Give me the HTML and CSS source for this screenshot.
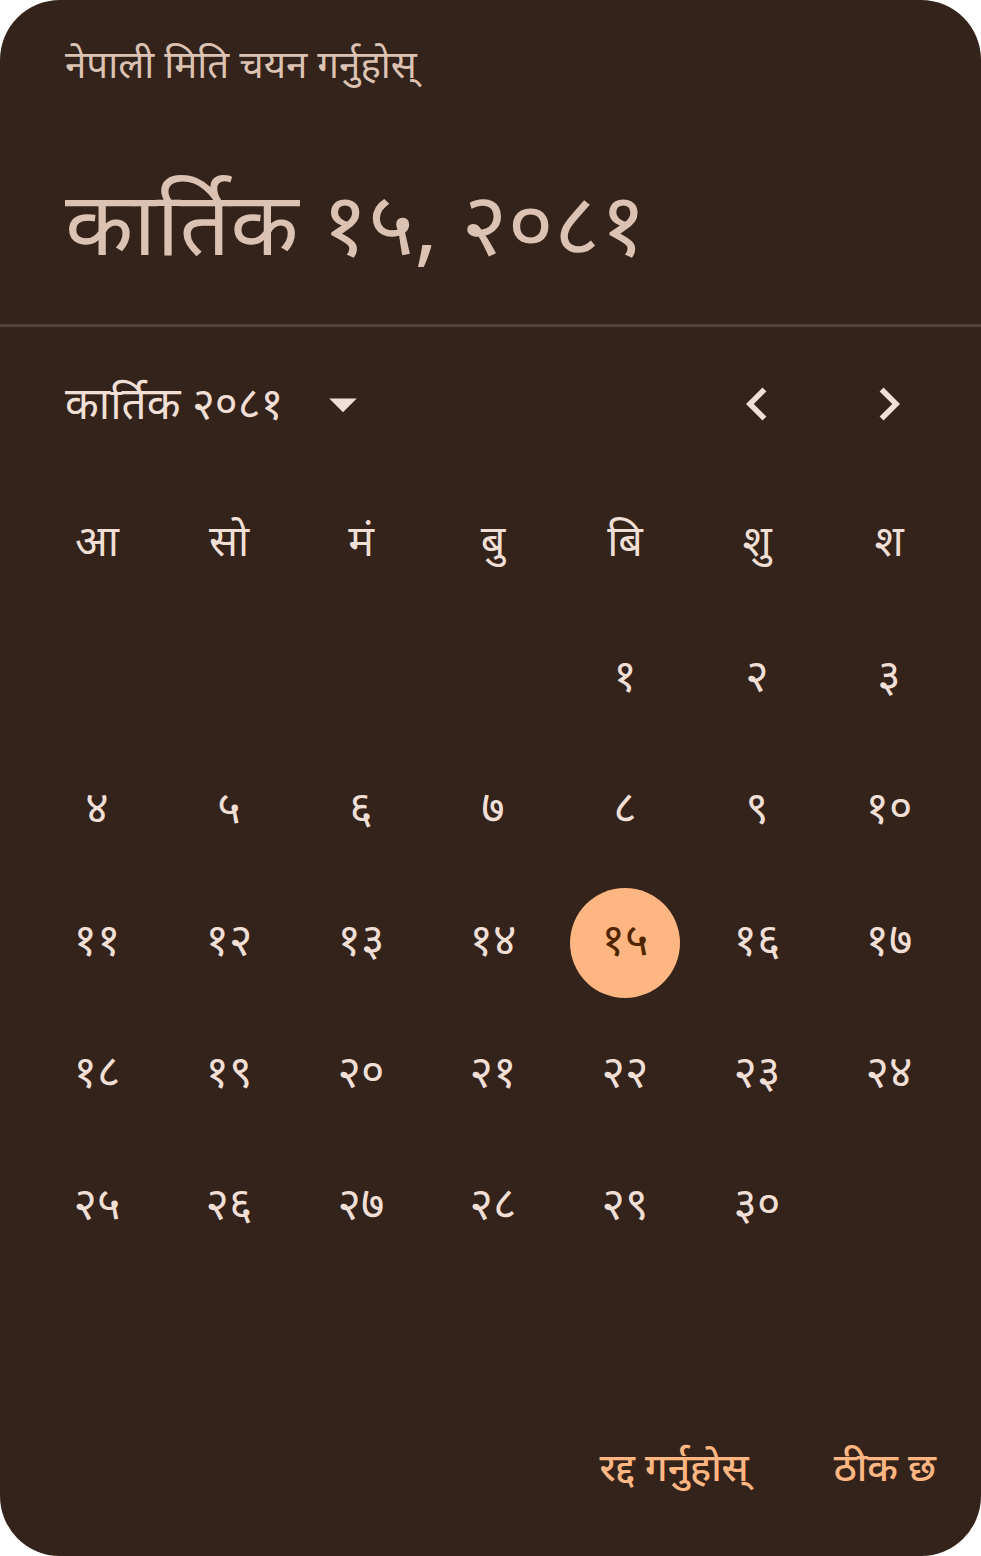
FILE: index.html
```html
<!DOCTYPE html>
<html>
<head>
    <meta charset="utf-8">
    <title>Nepali Date Picker</title>
    <link rel="stylesheet" href="styles.css">
</head>
<body>
    <div class="picker">
        <div class="header">
            <div class="title">नेपाली मिति चयन गर्नुहोस्</div>
            <div class="headline">कार्तिक १५, २०८१</div>
        </div>
        <div class="divider"></div>

        <div class="month-row">
            <div class="month-label">कार्तिक २०८१</div>
            <svg class="drop" viewBox="0 0 24 24"><path d="M7 10l5 5 5-5z"/></svg>
            <div class="nav">
                <button class="nav-btn">
                    <svg viewBox="0 0 24 24"><path d="M15.41 7.41L14 6l-6 6 6 6 1.41-1.41L10.83 12z"/></svg>
                </button>
                <button class="nav-btn">
                    <svg viewBox="0 0 24 24"><path d="M10 6L8.59 7.41 13.17 12l-4.58 4.59L10 18l6-6z"/></svg>
                </button>
            </div>
        </div>

        <div class="weekdays">
            <div>आ</div>
            <div>सो</div>
            <div>मं</div>
            <div>बु</div>
            <div>बि</div>
            <div>शु</div>
            <div>श</div>
        </div>

        <div class="days">
            <div></div><div></div><div></div><div></div>
            <div><span>१</span></div>
            <div><span>२</span></div>
            <div><span>३</span></div>
            <div><span>४</span></div>
            <div><span>५</span></div>
            <div><span>६</span></div>
            <div><span>७</span></div>
            <div><span>८</span></div>
            <div><span>९</span></div>
            <div><span>१०</span></div>
            <div><span>११</span></div>
            <div><span>१२</span></div>
            <div><span>१३</span></div>
            <div><span>१४</span></div>
            <div><span class="selected">१५</span></div>
            <div><span>१६</span></div>
            <div><span>१७</span></div>
            <div><span>१८</span></div>
            <div><span>१९</span></div>
            <div><span>२०</span></div>
            <div><span>२१</span></div>
            <div><span>२२</span></div>
            <div><span>२३</span></div>
            <div><span>२४</span></div>
            <div><span>२५</span></div>
            <div><span>२६</span></div>
            <div><span>२७</span></div>
            <div><span>२८</span></div>
            <div><span>२९</span></div>
            <div><span>३०</span></div>
            <div></div>
            <div></div><div></div><div></div><div></div><div></div><div></div><div></div>
        </div>

        <div class="actions">
            <button class="text-btn">रद्द गर्नुहोस्</button>
            <button class="text-btn">ठीक छ</button>
        </div>
    </div>
</body>
</html>
```

FILE: styles.css
```css
* {
    margin: 0px;
    padding: 0px;
    box-sizing: border-box;
}
body {
    background: #fff;
    font-family: "Noto Sans", "Noto Sans Devanagari", sans-serif;
}
.picker {
    width: 981px;
    height: 1556px;
    background: #33231a;
    border-radius: 60px;
    overflow: hidden;
}
.header {
    height: 324px;
    padding: 38px 65px 0;
}
.title {
    font-size: 38.5px;
    line-height: 50px;
    color: #dcc2b2;
}
.headline {
    margin-top: 83px;
    font-size: 89px;
    line-height: 100px;
    color: #dcc2b2;
}
.divider {
    height: 3px;
    background: #51423a;
}
.month-row {
    height: 150px;
    display: flex;
    align-items: center;
    padding: 0 26px 0 65px;
}
.month-label {
    font-size: 44px;
    color: #f1dfd5;
}
.drop {
    width: 66px;
    height: 66px;
    margin-left: 27px;
    margin-top: 4px;
    fill: #f1dfd5;
}
.nav {
    margin-left: auto;
    margin-top: 4px;
    display: flex;
}
.nav-btn {
    width: 132px;
    height: 132px;
    display: flex;
    align-items: center;
    justify-content: center;
    background: none;
    border: none;
}
.nav-btn svg {
    width: 66px;
    height: 66px;
    fill: #f1dfd5;
}
.weekdays,
.days {
    display: grid;
    grid-template-columns: repeat(7, 132px);
    padding-left: 31px;
}
.weekdays div {
    height: 136px;
    padding-bottom: 11px;
    display: flex;
    align-items: center;
    justify-content: center;
    font-size: 43px;
    color: #f1dfd5;
}
.days div {
    height: 132px;
    display: flex;
    align-items: center;
    justify-content: center;
}
.days span {
    width: 110px;
    height: 110px;
    padding-bottom: 12px;
    border-radius: 50%;
    display: flex;
    align-items: center;
    justify-content: center;
    font-size: 45px;
    color: #f1dfd5;
}
.days span.selected {
    background: #ffb682;
    color: #4f2500;
}
.actions {
    height: 120px;
    display: flex;
    align-items: center;
    justify-content: flex-end;
    gap: 19px;
    padding-right: 12px;
}
.text-btn {
    background: none;
    border: none;
    padding: 0 33px;
    font-family: "Noto Sans", "Noto Sans Devanagari", sans-serif;
    font-size: 39px;
    font-weight: 500;
    color: #ffb682;
}
```
